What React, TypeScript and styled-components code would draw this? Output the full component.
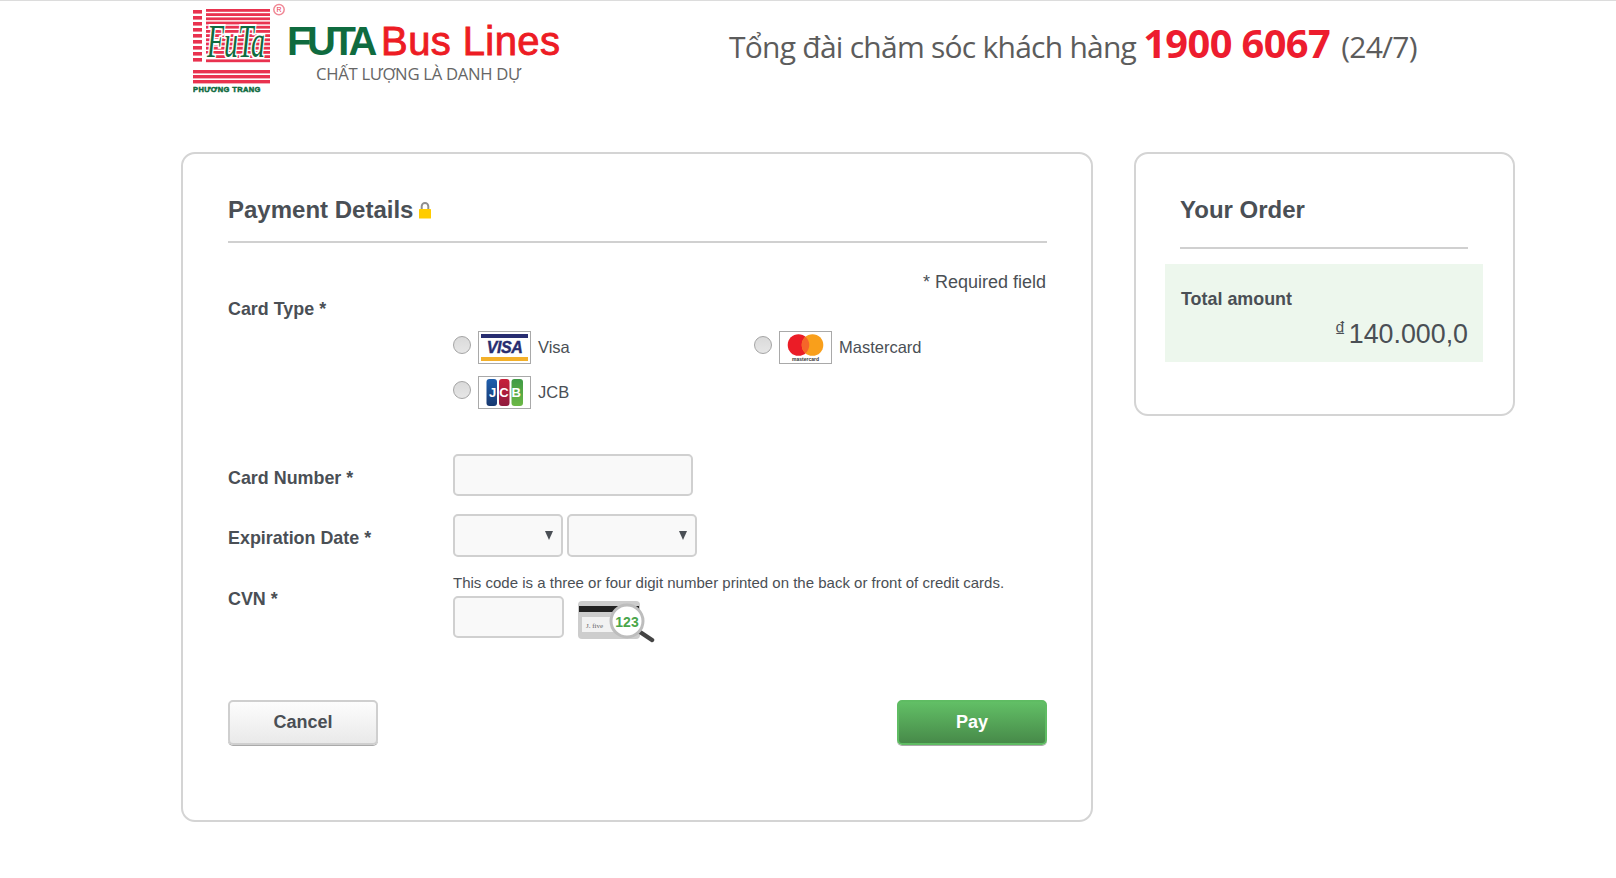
import React from "react";
import styled, { createGlobalStyle } from "styled-components";

const Global = createGlobalStyle`
  html, body { margin: 0; padding: 0; background: #fff; }
  body { font-family: "Liberation Sans", Arial, sans-serif; color: #4a4f55; }
  * { box-sizing: border-box; }
`;

const Page = styled.div`
  border-top: 1px solid #dcdcdc;
  min-height: 877px;
`;
const Header = styled.header`
  height: 151px;
  padding: 1px 0 0 193px;
  display: flex;
  align-items: flex-start;
`;
const LogoSvg = styled.svg`
  display: block;
  flex: none;
`;
const LogoWords = styled.div`
  margin: 17px 0 0 2px;
  width: 442px;
  display: flex;
  flex-direction: column;
`;
const BrandLine = styled.div`
  font-size: 40px;
  line-height: 44px;
  white-space: nowrap;
`;
const BrandGreen = styled.span`
  color: #0f6b3f;
  font-weight: 700;
  letter-spacing: -4.4px;
`;
const BrandRed = styled.span`
  color: #ed1c24;
  margin-left: 8px;
  -webkit-text-stroke: 0.9px #ed1c24;
  letter-spacing: 0.4px;
`;
const Tagline = styled.div`
  font-family: "Open Sans", sans-serif;
  font-size: 16.7px;
  line-height: 22px;
  color: #666;
  margin: 0 0 0 29px;
  letter-spacing: -0.3px;
  white-space: nowrap;
`;
const Hotline = styled.div`
  margin: 21px 0 0 0;
  font-family: "Open Sans", sans-serif;
  font-size: 30px;
  line-height: 40px;
  color: #5c5c5c;
  letter-spacing: -0.75px;
  white-space: nowrap;
`;
const HotNum = styled.b`
  color: #ed1c2e;
  font-size: 39.8px;
  font-weight: 700;
  letter-spacing: -0.6px;
  margin: 0 4px 0 0;
`;
const Columns = styled.main`
  display: flex;
  align-items: flex-start;
  gap: 41px;
  padding-left: 181px;
`;
const Card = styled.section<{ $w: number }>`
  width: ${(p) => p.$w}px;
  border: 2px solid #d4d4d4;
  border-radius: 14px;
  padding: 0 44px;
  background: #fff;
`;
const MainCard = styled(Card)`
  padding-left: 45px;
  padding-bottom: 75px;
`;
const SideCard = styled(Card)`
  padding-right: 45px;
  padding-bottom: 52px;
`;
const Title = styled.h2<{ $pb: number }>`
  margin: 0;
  padding: 40px 0 ${(p) => p.$pb}px;
  font-size: 24px;
  line-height: 32px;
  font-weight: 700;
  color: #4a4f55;
  border-bottom: 2px solid #d0d0d0;
  display: flex;
  align-items: center;
  gap: 6px;
`;
const Required = styled.div`
  margin: 29px 1px 0 0;
  text-align: right;
  font-size: 18px;
  line-height: 20px;
`;
const Label = styled.label<{ $pt?: number }>`
  display: block;
  font-size: 17.9px;
  line-height: 20px;
  font-weight: 700;
  padding-top: ${(p) => p.$pt ?? 0}px;
  color: #4a4f55;
`;
const TypeLabel = styled(Label)`
  margin-top: 7px;
`;
const Options = styled.div`
  margin: 12px 0 0 225px;
  display: grid;
  grid-template-columns: 301px 1fr;
  row-gap: 12px;
`;
const Option = styled.label`
  display: flex;
  align-items: center;
  height: 33px;
  font-size: 16.5px;
`;
const Radio = styled.input.attrs({ type: "radio", name: "card" })`
  appearance: none;
  width: 18px;
  height: 18px;
  margin: 0 7px 5px 0;
  border-radius: 50%;
  border: 1px solid #a4a4a4;
  background: linear-gradient(#dadada, #e6e6e6);
`;
const CardLogo = styled.svg`
  width: 53px;
  height: 33px;
  margin-right: 7px;
  display: block;
`;
const Row = styled.div<{ $mt: number }>`
  margin-top: ${(p) => p.$mt}px;
  display: grid;
  grid-template-columns: 225px 1fr;
`;
const TextInput = styled.input<{ $w: number }>`
  display: block;
  width: ${(p) => p.$w}px;
  height: 42px;
  border: 2px solid #d0d0d0;
  border-radius: 5px;
  background: #f9f9f9;
  outline: none;
`;
const Selects = styled.div`
  display: flex;
  gap: 4px;
`;
const SelectWrap = styled.div<{ $w: number }>`
  position: relative;
  width: ${(p) => p.$w}px;
  &::after {
    content: "";
    position: absolute;
    right: 10px;
    top: 17px;
    border-left: 4.5px solid transparent;
    border-right: 4.5px solid transparent;
    border-top: 9px solid #4a4f55;
    pointer-events: none;
  }
`;
const Select = styled.select`
  appearance: none;
  display: block;
  width: 100%;
  height: 43px;
  border: 2px solid #d0d0d0;
  border-radius: 5px;
  background: #f9f9f9;
`;
const Help = styled.div`
  font-size: 15px;
  line-height: 18px;
  margin-bottom: 4px;
  white-space: nowrap;
`;
const CvnLine = styled.div`
  display: flex;
  align-items: flex-start;
  gap: 13px;
`;
const CvnPic = styled.svg`
  width: 78px;
  height: 44px;
  margin-top: 4px;
  display: block;
`;
const Actions = styled.div`
  margin-top: 56px;
  display: flex;
  justify-content: space-between;
`;
const Button = styled.button`
  width: 150px;
  height: 45px;
  border-radius: 5px;
  font-family: "Liberation Sans", Arial, sans-serif;
  font-size: 18px;
  font-weight: 700;
  padding: 0;
`;
const CancelButton = styled(Button)`
  color: #4a4f55;
  border: 2px solid #cfcfcf;
  background: linear-gradient(#fdfdfd, #e9e9e9);
  box-shadow: 0 1px 0 #aaa;
`;
const PayButton = styled(Button)`
  color: #fff;
  border: 2px solid #5fbc63;
  background: linear-gradient(#62bf66, #478a49);
  box-shadow: 0 1px 0 #aaa;
`;
const TotalBox = styled.div`
  margin: 15px -15px 0;
  height: 98px;
  padding: 25px 15px 0 16px;
  background: #edf7ed;
`;
const TotalLabel = styled.div`
  font-size: 17.9px;
  line-height: 20px;
  font-weight: 700;
`;
const Price = styled.div`
  margin-top: 9px;
  display: flex;
  justify-content: flex-end;
  align-items: flex-start;
  font-size: 26.8px;
  line-height: 32px;
`;
const Dong = styled.span`
  font-size: 22px;
  line-height: 24px;
  margin-right: 3px;
`;

const LogoMark = () => (
  <LogoSvg width="92" height="94" viewBox="0 0 92 94">
    <g transform="translate(0 6)">
      <g fill="#e9324f">
        {[2, 8, 14, 20, 26, 32, 38, 44, 50].map((y) => (
          <rect key={y} x="0" y={y} width="9" height="3.6" />
        ))}
        {[0, 4.2, 8.4, 12.6, 16.8, 21, 25.2, 29.4, 33.6, 37.8, 42, 46.2, 50.4].map((y) => (
          <rect key={y} x="13" y={y + 1} width="64" height="2.8" />
        ))}
        {[62, 67, 72].map((y) => (
          <rect key={y} x="0" y={y} width="77" height="3.4" />
        ))}
      </g>
      <text
        transform="translate(14 49) scale(.82 1.35)"
        fontFamily="'Liberation Serif', serif"
        fontStyle="italic"
        fontSize="34"
        fill="#0f6b3f"
        stroke="#fff"
        strokeWidth="3"
        paintOrder="stroke"
      >
        FuTa
      </text>
      <text
        x="0"
        y="84"
        fontFamily="'Liberation Sans', sans-serif"
        fontWeight="700"
        fontSize="7.5"
        fill="#0f6b3f"
        stroke="#0f6b3f"
        strokeWidth="0.5"
        letterSpacing="0.4"
      >
        PHƯƠNG TRANG
      </text>
      <circle cx="86" cy="1.6" r="5.2" fill="#fff" stroke="#f08a96" strokeWidth="1.5" />
      <text x="83.4" y="4.2" fontFamily="'Liberation Sans', sans-serif" fontSize="7" fill="#e9324f">
        R
      </text>
    </g>
  </LogoSvg>
);

const Visa = () => (
  <CardLogo viewBox="0 0 53 33">
    <rect x="0.5" y="0.5" width="52" height="32" fill="#fff" stroke="#a9a9a9" />
    <rect x="3" y="3" width="47" height="4" fill="#272d70" />
    <rect x="3" y="26" width="47" height="4" fill="#f3b02a" />
    <text
      x="26.5"
      y="22"
      textAnchor="middle"
      fontFamily="'Liberation Sans', sans-serif"
      fontWeight="700"
      fontStyle="italic"
      fontSize="16"
      fill="#272d70"
      stroke="#272d70"
      strokeWidth="0.4"
      letterSpacing="-0.4"
    >
      VISA
    </text>
  </CardLogo>
);
const Master = () => (
  <CardLogo viewBox="0 0 53 33">
    <rect x="0.5" y="0.5" width="52" height="32" fill="#fff" stroke="#a9a9a9" />
    <circle cx="19.5" cy="14" r="10.8" fill="#eb1c26" />
    <circle cx="33.5" cy="14" r="10.8" fill="#f99f1b" />
    <path d="M26.5 5.8 a10.8 10.8 0 0 1 0 16.4 a10.8 10.8 0 0 1 0 -16.4 Z" fill="#f5652a" />
    <text x="26.5" y="30" textAnchor="middle" fontFamily="'Liberation Sans', sans-serif" fontWeight="700" fontSize="5" fill="#333">
      mastercard
    </text>
  </CardLogo>
);
const Jcb = () => (
  <CardLogo viewBox="0 0 53 33">
    <defs>
      <linearGradient id="jb" x1="0" x2="0" y1="0" y2="1">
        <stop offset="0" stopColor="#1f5fae" />
        <stop offset="1" stopColor="#17386f" />
      </linearGradient>
      <linearGradient id="jr" x1="0" x2="0" y1="0" y2="1">
        <stop offset="0" stopColor="#c8203a" />
        <stop offset="1" stopColor="#8f1c3e" />
      </linearGradient>
      <linearGradient id="jg" x1="0" x2="0" y1="0" y2="1">
        <stop offset="0" stopColor="#3f9a45" />
        <stop offset="1" stopColor="#6cb845" />
      </linearGradient>
    </defs>
    <rect x="0.5" y="0.5" width="52" height="32" fill="#fff" stroke="#a9a9a9" />
    <rect x="8.5" y="3" width="10.5" height="27" rx="3" fill="url(#jb)" />
    <rect x="21" y="3" width="10.5" height="27" rx="3" fill="url(#jr)" />
    <rect x="33.5" y="3" width="11.5" height="27" rx="3" fill="url(#jg)" />
    <text x="11" y="21" fontFamily="'Liberation Sans', sans-serif" fontWeight="700" fontSize="13" fill="#fff" letterSpacing="3">
      JCB
    </text>
  </CardLogo>
);
const CvnArt = () => (
  <CvnPic viewBox="0 0 78 44">
    <rect x="1" y="1" width="62" height="38" rx="4" fill="#cdcdcd" />
    <rect x="2" y="6" width="60" height="6" fill="#222" />
    <rect x="5" y="17" width="36" height="15" fill="#f2f2f2" />
    <text x="9" y="28" fontFamily="'Liberation Serif', serif" fontSize="7" fill="#666">
      J. five
    </text>
    <path d="M60 30 L75 40" stroke="#444" strokeWidth="4.5" strokeLinecap="round" />
    <circle cx="50" cy="21" r="16" fill="#fff" stroke="#bdbdbd" strokeWidth="3" />
    <text x="50" y="26.5" textAnchor="middle" fontFamily="'Liberation Sans', sans-serif" fontWeight="700" fontSize="14" fill="#4aa64a">
      123
    </text>
  </CvnPic>
);
const Lock = () => (
  <svg width="12" height="18" viewBox="0 0 12 18">
    <path d="M2.7 9 V5.3 a3.3 3.3 0 0 1 6.6 0 V9" fill="none" stroke="#8f8f8f" strokeWidth="2" />
    <rect x="0" y="8" width="12" height="9.5" rx="0.5" fill="#ffcc00" />
  </svg>
);

export default function App() {
  return (
    <Page>
      <Global />
      <Header>
        <LogoMark />
        <LogoWords>
          <BrandLine>
            <BrandGreen>FUTA</BrandGreen>
            <BrandRed>Bus Lines</BrandRed>
          </BrandLine>
          <Tagline>CHẤT LƯỢNG LÀ DANH DỰ</Tagline>
        </LogoWords>
        <Hotline>
          Tổng đài chăm sóc khách hàng <HotNum>1900 6067</HotNum> (24/7)
        </Hotline>
      </Header>
      <Columns>
        <MainCard $w={912}>
          <Title $pb={15}>
            Payment Details <Lock />
          </Title>
          <Required>* Required field</Required>
          <TypeLabel>Card Type *</TypeLabel>
          <Options>
            <Option>
              <Radio />
              <Visa />
              Visa
            </Option>
            <Option>
              <Radio />
              <Master />
              Mastercard
            </Option>
            <Option>
              <Radio />
              <Jcb />
              JCB
            </Option>
          </Options>
          <Row $mt={45}>
            <Label $pt={14}>Card Number *</Label>
            <TextInput $w={240} />
          </Row>
          <Row $mt={18}>
            <Label $pt={14}>Expiration Date *</Label>
            <Selects>
              <SelectWrap $w={110}>
                <Select />
              </SelectWrap>
              <SelectWrap $w={130}>
                <Select />
              </SelectWrap>
            </Selects>
          </Row>
          <Row $mt={17}>
            <Label $pt={15}>CVN *</Label>
            <div>
              <Help>This code is a three or four digit number printed on the back or front of credit cards.</Help>
              <CvnLine>
                <TextInput $w={111} />
                <CvnArt />
              </CvnLine>
            </div>
          </Row>
          <Actions>
            <CancelButton>Cancel</CancelButton>
            <PayButton>Pay</PayButton>
          </Actions>
        </MainCard>
        <SideCard $w={381}>
          <Title $pb={21}>Your Order</Title>
          <TotalBox>
            <TotalLabel>Total amount</TotalLabel>
            <Price>
              <Dong>₫</Dong>140.000,0
            </Price>
          </TotalBox>
        </SideCard>
      </Columns>
    </Page>
  );
}
